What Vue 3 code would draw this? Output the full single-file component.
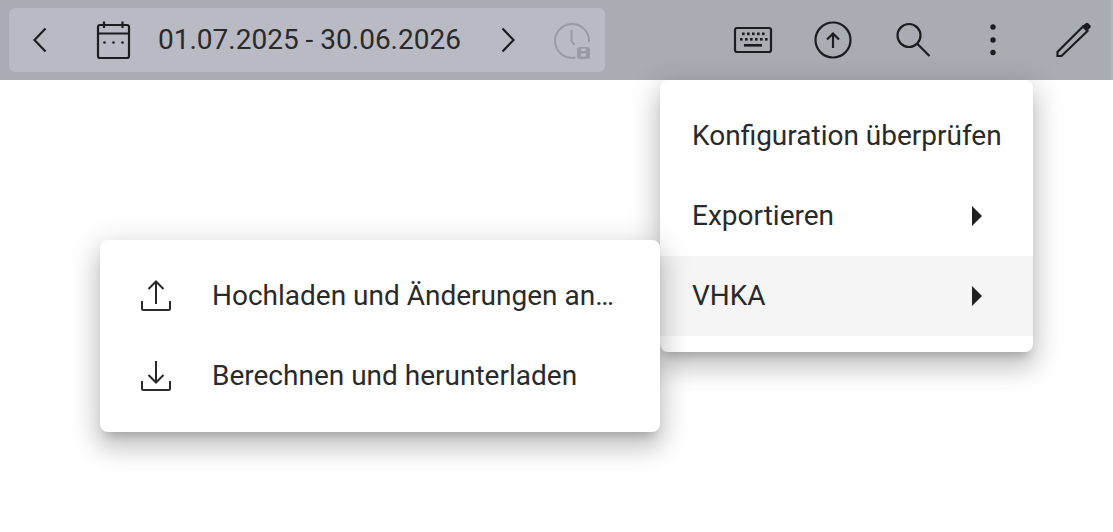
<script setup>
const exportItems = [
  { label: "Konfiguration überprüfen", arrow: false },
  { label: "Exportieren", arrow: true },
  { label: "VHKA", arrow: true, active: true },
];
</script>

<template>
  <div class="page">
    <header class="toolbar">
      <div class="range">
        <svg class="prev" width="14" height="26" viewBox="0 0 14 26">
          <path d="M12.500 1.500 1.500 13l11 11.500" class="line" />
        </svg>
        <svg class="calendar" width="36" height="40" viewBox="0 0 36 40">
          <rect x="3" y="5" width="31" height="33" rx="2" class="line" />
          <path d="M3 13.500h31M9 1.500V8M27.500 1.500V8" class="line" />
          <circle cx="9.500" cy="22.500" r="1.300" class="fill" />
          <circle cx="18.500" cy="22.500" r="1.300" class="fill" />
          <circle cx="27.500" cy="22.500" r="1.300" class="fill" />
        </svg>
        <span class="dates">01.07.2025 - 30.06.2026</span>
        <svg class="next" width="14" height="26" viewBox="0 0 14 26">
          <path d="M1.500 1.500 12.500 13l-11 11.500" class="line" />
        </svg>
        <svg class="clock" width="38" height="38" viewBox="0 -2 38 38">
          <path d="M21.500 34.600A17 17 0 1 1 35 19" fill="none" stroke="#999ba2" stroke-width="2" />
          <path d="M17.500 7v11l3 4" fill="none" stroke="#999ba2" stroke-width="2" />
          <rect x="23" y="24" width="13" height="12" rx="2.500" fill="#999ba2" />
          <rect x="27" y="25.500" width="5" height="2.500" rx="1" fill="#b9bac4" />
          <rect x="27" y="30.500" width="5" height="3" fill="#b9bac4" />
        </svg>
      </div>
      <div class="actions">
        <div class="action">
          <svg width="40" height="28" viewBox="0 0 40 28">
            <rect x="2" y="2" width="36" height="24" rx="2" class="line" />
            <g class="fill">
              <rect x="9" y="6.500" width="2.600" height="2.600" /><rect x="14" y="6.500" width="2.600" height="2.600" />
              <rect x="19" y="6.500" width="2.600" height="2.600" /><rect x="24" y="6.500" width="2.600" height="2.600" />
              <rect x="29" y="6.500" width="2.600" height="2.600" /><rect x="7" y="12" width="2.600" height="2.600" />
              <rect x="12" y="12" width="2.600" height="2.600" /><rect x="17" y="12" width="2.600" height="2.600" />
              <rect x="22" y="12" width="2.600" height="2.600" /><rect x="27" y="12" width="2.600" height="2.600" />
              <rect x="32" y="12" width="2.600" height="2.600" /><rect x="11" y="18" width="18" height="2.600" />
            </g>
          </svg>
        </div>
        <div class="action">
          <svg width="38" height="38" viewBox="0 0 38 38">
            <circle cx="19" cy="19" r="17.500" class="line" />
            <path d="M19 27V13M13 18.500l6-6 6 6" class="line" />
          </svg>
        </div>
        <div class="action">
          <svg width="36" height="36" viewBox="0 0 36 36">
            <circle cx="14" cy="13.500" r="11.500" class="line" />
            <path d="M22.500 22l12 12" class="line" />
          </svg>
        </div>
        <div class="action">
          <svg width="8" height="34" viewBox="0 0 8 34">
            <circle cx="4" cy="4" r="2.700" class="fill" />
            <circle cx="4" cy="17" r="2.700" class="fill" />
            <circle cx="4" cy="29.500" r="2.700" class="fill" />
          </svg>
        </div>
        <div class="action">
          <svg width="36" height="36" viewBox="0 0 36 36">
            <path d="M2.500 34v-4L28 4.500 32.500 9 6.500 34z" class="line" />
            <path d="M27 4l3.500-2.500a2 2 0 0 1 3 0L35 3a2 2 0 0 1 0 3l-3 3z" class="fill" />
          </svg>
        </div>
      </div>
    </header>

    <div class="menu main-menu">
      <div v-for="item in exportItems" :key="item.label" class="row" :class="{ active: item.active }">
        <span class="grow">{{ item.label }}</span>
        <span v-if="item.arrow" class="arrow"></span>
      </div>
    </div>

    <div class="menu sub-menu">
      <div class="row icon-row">
        <svg class="tray" width="32" height="32" viewBox="0 0 32 32">
          <path d="M16 24V2.500M8.500 9 16 1.500 23.500 9M2 21v7.500A1.500 1.500 0 0 0 3.500 30h25a1.500 1.500 0 0 0 1.500-1.500V21" class="line" />
        </svg>
        <span class="label">Hochladen und Änderungen an…</span>
      </div>
      <div class="row icon-row">
        <svg class="tray" width="32" height="32" viewBox="0 0 32 32">
          <path d="M16 1v21M8.500 15l7.500 7.500 7.500-7.500M2 21v7.500A1.500 1.500 0 0 0 3.500 30h25a1.500 1.500 0 0 0 1.500-1.500V21" class="line" />
        </svg>
        <span class="label">Berechnen und herunterladen</span>
      </div>
    </div>
  </div>
</template>

<style scoped>
.page {
  position: relative;
  width: 1113px;
  height: 532px;
  background: #fff;
  overflow: hidden;
  font-family: Roboto, sans-serif;
  color: #2a2a2a;
}
.toolbar {
  height: 80px;
  background: #a9acb3;
  border-right: 2px solid #b3b5bb;
  display: flex;
  align-items: center;
  padding-left: 9px;
}
.range {
  width: 596px;
  height: 64px;
  background: #b9bac4;
  border-radius: 6px;
  display: flex;
  align-items: center;
  flex-shrink: 0;
}
.prev {
  margin-left: 24px;
}
.calendar {
  margin-left: 48px;
}
.dates {
  margin-left: 27px;
  margin-bottom: 2px;
  width: 302px;
  font-size: 28px;
  white-space: nowrap;
}
.next {
  margin-left: 41px;
}
.clock {
  margin-left: 39px;
}
.actions {
  margin-left: 108px;
  display: flex;
  align-items: center;
}
.action {
  width: 80px;
  display: flex;
  justify-content: center;
}
.line {
  fill: none;
  stroke: #1d1d1f;
  stroke-width: 2.200;
}
.fill {
  fill: #1d1d1f;
}
.menu {
  position: absolute;
  background: #fff;
  border-radius: 8px;
  box-shadow: 0 8px 10px -5px rgba(0, 0, 0, 0.2), 0 16px 24px 2px rgba(0, 0, 0, 0.14), 0 6px 30px 5px rgba(0, 0, 0, 0.12);
  padding: 16px 0;
  font-size: 28px;
}
.main-menu {
  left: 660px;
  top: 80px;
  width: 373px;
}
.sub-menu {
  left: 100px;
  top: 240px;
  width: 560px;
}
.row {
  height: 80px;
  display: flex;
  align-items: center;
  padding: 0 32px;
  white-space: nowrap;
}
.active {
  background: #f5f5f5;
}
.grow {
  flex: 1;
  margin-bottom: 2px;
}
.arrow {
  margin-right: 19px;
  border-left: 10px solid #212121;
  border-top: 10px solid transparent;
  border-bottom: 10px solid transparent;
}
.icon-row {
  padding-left: 40px;
}
.tray .line {
  stroke: #2a2a2a;
  stroke-width: 2;
}
.label {
  margin-left: 40px;
  margin-bottom: 2px;
}
</style>
